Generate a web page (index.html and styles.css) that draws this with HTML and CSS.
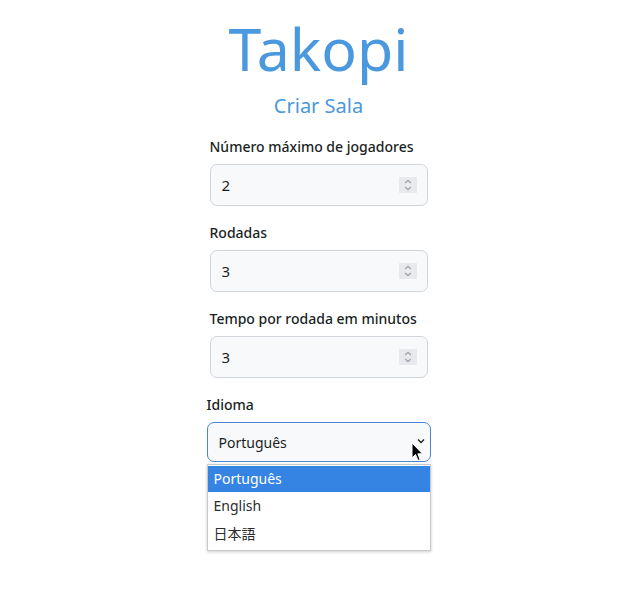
FILE: index.html
```html
<!DOCTYPE html>
<html lang="pt">
<head>
<meta charset="utf-8">
<title>Takopi</title>
<link rel="stylesheet" href="styles.css">
</head>
<body>
<main class="page">
  <h1 class="title">Takopi</h1>
  <h2 class="subtitle">Criar Sala</h2>
  <form class="form">
    <div class="field">
      <label class="label" for="players">Número máximo de jogadores</label>
      <div class="input">
        <input class="input-control" id="players" type="number" value="2">
        <span class="spin"><svg width="10" height="14" viewBox="0 0 10 14"><path d="M2.2 5 L5 2.3 L7.8 5 M2.2 9 L5 11.7 L7.8 9" fill="none" stroke="#9a9da3" stroke-width="1.1"/></svg></span>
      </div>
    </div>
    <div class="field">
      <label class="label" for="rounds">Rodadas</label>
      <div class="input">
        <input class="input-control" id="rounds" type="number" value="3">
        <span class="spin"><svg width="10" height="14" viewBox="0 0 10 14"><path d="M2.2 5 L5 2.3 L7.8 5 M2.2 9 L5 11.7 L7.8 9" fill="none" stroke="#9a9da3" stroke-width="1.1"/></svg></span>
      </div>
    </div>
    <div class="field">
      <label class="label" for="time">Tempo por rodada em minutos</label>
      <div class="input">
        <input class="input-control" id="time" type="number" value="3">
        <span class="spin"><svg width="10" height="14" viewBox="0 0 10 14"><path d="M2.2 5 L5 2.3 L7.8 5 M2.2 9 L5 11.7 L7.8 9" fill="none" stroke="#9a9da3" stroke-width="1.1"/></svg></span>
      </div>
    </div>
    <div class="field field-wide">
      <label class="label" for="lang">Idioma</label>
      <div class="select-wrap">
        <div class="select" id="lang">
          <span>Português</span>
          <svg class="chev" width="10" height="7" viewBox="0 0 10 7"><path d="M2 1.5 L5 4.5 L8 1.5" fill="none" stroke="#222" stroke-width="1.4"/></svg>
        </div>
        <svg class="cursor" width="13" height="20" viewBox="0 0 13 20"><path d="M1 1 L1 16 L4.5 12.5 L7 18.5 L9.2 17.6 L6.8 11.8 L11.5 11.8 Z" fill="#000" stroke="#fff" stroke-width="1"/></svg>
        <ul class="dropdown">
          <li class="option selected">Português</li>
          <li class="option">English</li>
          <li class="option">日本語</li>
        </ul>
      </div>
    </div>
  </form>
</main>
</body>
</html>
```
FILE: styles.css
```css
* { box-sizing: border-box; }
html, body { margin: 0; padding: 0; background: #fff; }
body {
  min-height: 594px;
  font-family: "Noto Sans", "Noto Sans CJK JP", sans-serif;
  color: #1f2328;
}
.page {
  display: flex;
  flex-direction: column;
  align-items: center;
  padding-top: 10px;
  min-height: 594px;
}
.title {
  margin: 0;
  font-size: 59px;
  font-weight: 400;
  line-height: 76px;
  color: #4a98de;
}
.subtitle {
  margin: 6px 0 0;
  font-size: 20px;
  font-weight: 400;
  line-height: 28px;
  color: #4a98de;
}
.form {
  display: flex;
  flex-direction: column;
  width: 218px;
  margin-top: 16px;
}
.field {
  display: flex;
  flex-direction: column;
  margin-bottom: 16px;
}
.label {
  font-size: 14px;
  font-weight: 500;
  line-height: 22px;
  margin-bottom: 6px;
  color: #1b1f24;
}
.input {
  height: 42px;
  width: 218px;
  display: flex;
  align-items: center;
  border: 1px solid #d0d4db;
  border-radius: 7px;
  background: #f8f9fb;
  padding: 0 10px 0 11px;
}
.input-control {
  flex: 1;
  min-width: 0;
  border: none;
  background: transparent;
  padding: 0;
  font-family: "Noto Sans", sans-serif;
  font-size: 15px;
  color: #1b1f24;
  outline: none;
  -moz-appearance: textfield;
}
.input-control::-webkit-inner-spin-button,
.input-control::-webkit-outer-spin-button {
  -webkit-appearance: none;
  margin: 0;
}
.spin {
  width: 18px;
  height: 16px;
  display: flex;
  align-items: center;
  justify-content: center;
  background: #e8e9ec;
}
.field-wide {
  margin-left: -3px;
  margin-right: -3px;
}
.select-wrap { position: relative; }
.select {
  height: 40px;
  display: flex;
  align-items: center;
  justify-content: space-between;
  padding: 0 4px 0 11px;
  border: 1px solid #4a86d0;
  border-radius: 7px;
  background: #f8f9fb;
  font-size: 14px;
  color: #1b1f24;
}
.chev { margin-top: -1px; }
.cursor {
  position: absolute;
  left: 204px;
  top: 20px;
}
.dropdown {
  position: absolute;
  left: 0;
  right: 0;
  top: 42px;
  margin: 0;
  padding: 1px 0 2px;
  list-style: none;
  background: #fff;
  border: 1px solid #c8c8c8;
  box-shadow: 0 1px 3px rgba(0,0,0,0.2);
}
.option {
  height: 28px;
  line-height: 28px;
  padding-left: 6px;
  font-size: 14px;
  color: #2b2b2b;
}
.option.selected {
  height: 26px;
  line-height: 26px;
  background: #3584e4;
  color: #fff;
}
```
